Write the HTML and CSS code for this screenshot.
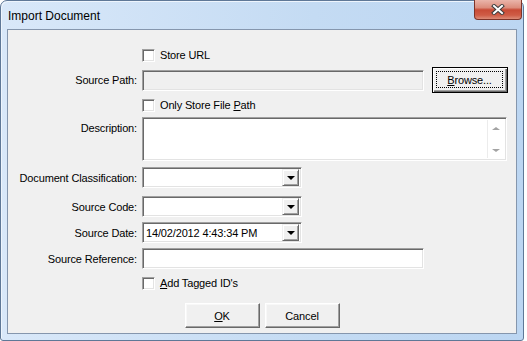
FILE: index.html
```html
<!DOCTYPE html>
<html lang="en">
<head>
    <meta charset="UTF-8">
    <title>Import Document</title>
    <link rel="stylesheet" href="styles.css">
</head>
<body>
    <div class="window">
        <div class="titlebar">
            <span class="title">Import Document</span>
            <div class="close">
                <svg width="14" height="11" viewBox="0 0 14 11">
                    <path d="M3 2 L11 9 M11 2 L3 9" stroke="#3c3c3c" stroke-width="4" stroke-linecap="square"/>
                    <path d="M3 2 L11 9 M11 2 L3 9" stroke="#fff" stroke-width="2" stroke-linecap="square"/>
                </svg>
            </div>
        </div>

        <div class="client">
            <div class="form">
                <div class="row row-check">
                    <span class="label"></span>
                    <span class="checkbox"></span>
                    <span class="check-text">Store URL</span>
                </div>

                <div class="row row-path">
                    <span class="label">Source Path:</span>
                    <div class="field field-wide field-disabled"></div>
                    <button class="btn btn-default"><span class="focus"><u>B</u>rowse...</span></button>
                </div>

                <div class="row row-check">
                    <span class="label"></span>
                    <span class="checkbox"></span>
                    <span class="check-text">Only Store File <u>P</u>ath</span>
                </div>

                <div class="row row-desc">
                    <span class="label">Description:</span>
                    <div class="field memo">
                        <div class="scrollbar">
                            <span class="arrow-up"></span>
                            <span class="arrow-down"></span>
                        </div>
                    </div>
                </div>

                <div class="row row-combo first-combo">
                    <span class="label">Document Classification:</span>
                    <div class="field combo">
                        <span class="combo-text"></span>
                        <span class="drop"><span class="tri"></span></span>
                    </div>
                </div>

                <div class="row row-combo second-combo">
                    <span class="label">Source Code:</span>
                    <div class="field combo">
                        <span class="combo-text"></span>
                        <span class="drop"><span class="tri"></span></span>
                    </div>
                </div>

                <div class="row row-combo">
                    <span class="label">Source Date:</span>
                    <div class="field combo">
                        <span class="combo-text">14/02/2012 4:43:34 PM</span>
                        <span class="drop"><span class="tri"></span></span>
                    </div>
                </div>

                <div class="row row-combo">
                    <span class="label">Source Reference:</span>
                    <div class="field field-wide"></div>
                </div>

                <div class="row row-check last-check">
                    <span class="label"></span>
                    <span class="checkbox"></span>
                    <span class="check-text"><u>A</u>dd Tagged ID's</span>
                </div>
            </div>

            <div class="buttons">
                <button class="btn"><u>O</u>K</button>
                <button class="btn">Cancel</button>
            </div>
        </div>
    </div>
</body>
</html>
```

FILE: styles.css
```css
body {
    margin: 0;
    background-color: #fff;
    font-family: "Liberation Sans", Arial, sans-serif;
    font-size: 11px;
    letter-spacing: -0.15px;
    color: #000;
}

.window {
    width: 524px;
    height: 341px;
    box-sizing: border-box;
    border: 1px solid #5f7897;
    border-radius: 7px 7px 3px 3px;
    padding: 0 6px 6px;
    background: linear-gradient(to right, #d9e8f9, #c4dbf3 60%, #bcd6f2);
    box-shadow: inset 1px 1px 0 #eef5fd;
}

.titlebar {
    height: 28px;
    display: flex;
    align-items: center;
    justify-content: space-between;
}

.title {
    font-size: 12px;
    letter-spacing: 0;
    padding-left: 1px;
    padding-top: 1px;
}

.close {
    align-self: flex-start;
    width: 48px;
    height: 20px;
    box-sizing: border-box;
    margin-top: -1px;
    margin-right: -5px;
    border: 1px solid #7e3328;
    border-top: none;
    border-radius: 0 0 4px 4px;
    background: linear-gradient(#eab5aa, #dc8d7c 40%, #c84b36 52%, #cf5c46 80%, #dc8c78);
    display: flex;
    align-items: center;
    justify-content: center;
}

.client {
    height: 305px;
    box-sizing: border-box;
    border: 1px solid #8596ad;
    background-color: #f0f0f0;
}

.form {
    padding-top: 17px;
}

.row {
    display: flex;
    align-items: center;
    margin-top: 4px;
}

.row:first-child {
    margin-top: 0;
}

.label {
    width: 129px;
    margin-right: 5px;
    text-align: right;
    flex-shrink: 0;
}

.row-check {
    height: 16px;
}

.row-path {
    height: 26px;
}

.row-desc {
    height: 44px;
    align-items: flex-start;
}

.row-desc .label {
    padding-top: 5px;
}

.row-combo {
    height: 21px;
    margin-top: 5px;
}

.first-combo {
    margin-top: 6px;
}

.second-combo {
    margin-top: 8px;
}

.last-check {
    margin-top: 6px;
}

.checkbox {
    width: 13px;
    height: 13px;
    box-sizing: border-box;
    background-color: #fff;
    border: 1px solid;
    border-color: #a0a0a0 #fff #fff #a0a0a0;
    box-shadow: inset 1px 1px 0 #696969, inset -1px -1px 0 #e3e3e3;
}

.check-text {
    margin-left: 5px;
}

.field {
    height: 21px;
    box-sizing: border-box;
    background-color: #fff;
    border: 1px solid;
    border-color: #a0a0a0 #fff #fff #a0a0a0;
    box-shadow: inset 1px 1px 0 #696969, inset -1px -1px 0 #e3e3e3;
}

.field-wide {
    width: 282px;
}

.field-disabled {
    background-color: #f0f0f0;
}

.memo {
    width: 365px;
    height: 44px;
    display: flex;
    justify-content: flex-end;
    padding: 2px;
}

.scrollbar {
    width: 16px;
    border-left: 1px solid #ececec;
    display: flex;
    flex-direction: column;
    align-items: center;
    justify-content: space-between;
    padding: 7px 0 6px;
}

.arrow-up,
.arrow-down {
    width: 0;
    height: 0;
    border-left: 4px solid transparent;
    border-right: 4px solid transparent;
}

.arrow-up {
    border-bottom: 3px solid #a3a3a3;
}

.arrow-down {
    border-top: 3px solid #a3a3a3;
}

.combo {
    width: 160px;
    display: flex;
    align-items: center;
    padding: 2px;
}

.combo-text {
    flex: 1;
    padding-left: 1px;
}

.drop {
    width: 17px;
    height: 17px;
    box-sizing: border-box;
    background-color: #f0f0f0;
    border: 1px solid;
    border-color: #f0f0f0 #696969 #696969 #f0f0f0;
    box-shadow: inset 1px 1px 0 #fff, inset -1px -1px 0 #a0a0a0;
    display: flex;
    align-items: center;
    justify-content: center;
}

.tri {
    width: 0;
    height: 0;
    border-left: 4px solid transparent;
    border-right: 4px solid transparent;
    border-top: 4px solid #000;
    margin-top: 1px;
}

.btn {
    width: 75px;
    height: 25px;
    box-sizing: border-box;
    font-family: inherit;
    font-size: 11px;
    letter-spacing: inherit;
    color: #000;
    background-color: #f0f0f0;
    border: 1px solid;
    border-color: #fff #696969 #696969 #fff;
    box-shadow: inset -1px -1px 0 #a0a0a0, inset 1px 1px 0 #f8f8f8;
    padding: 0;
}

.btn-default {
    width: 76px;
    height: 26px;
    margin-left: 8px;
    border-color: #000;
    box-shadow: inset 1px 1px 0 #fff, inset -1px -1px 0 #696969, inset -2px -2px 0 #a0a0a0;
    display: flex;
    padding: 3px 4px 4px 3px;
}

.focus {
    flex: 1;
    border: 1px dotted #000;
    display: flex;
    align-items: center;
    justify-content: center;
}

.buttons {
    display: flex;
    justify-content: center;
    gap: 5px;
    margin-top: 12px;
}
```
